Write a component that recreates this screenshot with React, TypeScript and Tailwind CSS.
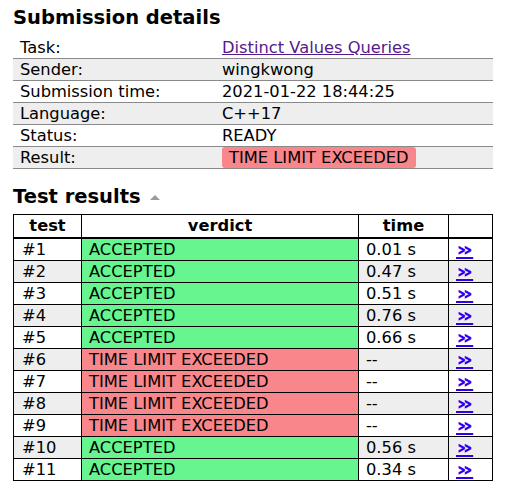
import React from 'react'

const details: Array<[string, React.ReactNode]> = [
  ['Task:', <a href="#" className="text-[#551a8b] underline">Distinct Values Queries</a>],
  ['Sender:', 'wingkwong'],
  ['Submission time:', '2021-01-22 18:44:25'],
  ['Language:', 'C++17'],
  ['Status:', 'READY'],
  ['Result:', <span className="rounded-[3px] bg-[#f8868b] px-[7px] py-[1px]">TIME LIMIT EXCEEDED</span>],
]

const tests = [
  { ok: true, time: '0.01 s' },
  { ok: true, time: '0.47 s' },
  { ok: true, time: '0.51 s' },
  { ok: true, time: '0.76 s' },
  { ok: true, time: '0.66 s' },
  { ok: false, time: '--' },
  { ok: false, time: '--' },
  { ok: false, time: '--' },
  { ok: false, time: '--' },
  { ok: true, time: '0.56 s' },
  { ok: true, time: '0.34 s' },
]

export default function App() {
  return (
    <div
      className="min-h-[498px] w-[525px] bg-white px-[13px] pt-[3px] text-[16.3px] text-black"
      style={{ fontFamily: '"DejaVu Sans", Verdana, sans-serif' }}
    >
      <h2 className="text-[19.5px] font-bold leading-[30px]">Submission details</h2>
      <table className="mt-[4px] w-[480px] border-collapse leading-[21px]">
        <tbody>
          {details.map(([label, value], i) => (
            <tr key={label} className={`border-b border-[#8a8a8a] ${i % 2 === 1 ? 'bg-[#eeeeee]' : ''}`}>
              <td className="w-[209px] pl-[7px]">{label}</td>
              <td>{value}</td>
            </tr>
          ))}
        </tbody>
      </table>

      <h2 className="mt-[13px] flex items-center gap-[9px] text-[19.5px] font-bold leading-[30px]">
        Test results
        <svg width="10" height="5" viewBox="0 0 10 5" className="mt-[1px]">
          <polygon points="0,5 5,0 10,5" fill="#9a9a9a" />
        </svg>
      </h2>
      <table className="mt-[2px] w-[480px] border-collapse border border-black leading-[21px]">
        <thead>
          <tr className="border-b-2 border-black font-bold leading-[22px]">
            <th className="w-[68px] border border-black">test</th>
            <th className="w-[277px] border border-black">verdict</th>
            <th className="w-[90px] border border-black">time</th>
            <th className="border border-black"></th>
          </tr>
        </thead>
        <tbody>
          {tests.map((t, i) => {
            const stripe = i % 2 === 1 ? 'bg-[#eeeeee]' : 'bg-white'
            return (
              <tr key={i}>
                <td className={`border border-black pl-[8px] ${stripe}`}>#{i + 1}</td>
                <td className={`border border-black pl-[7px] ${t.ok ? 'bg-[#66f58f]' : 'bg-[#f8868b]'}`}>
                  {t.ok ? 'ACCEPTED' : 'TIME LIMIT EXCEEDED'}
                </td>
                <td className={`border border-black pl-[7px] ${stripe}`}>{t.time}</td>
                <td className={`border border-black pl-[7px] ${stripe}`}>
                  <a
                    href="#"
                    className="inline-block origin-left scale-x-[1.4] align-top text-[19px] font-bold leading-[21px] text-[#3300ee] underline decoration-[1.5px] underline-offset-[1px]"
                  >
                    »
                  </a>
                </td>
              </tr>
            )
          })}
        </tbody>
      </table>
    </div>
  )
}
